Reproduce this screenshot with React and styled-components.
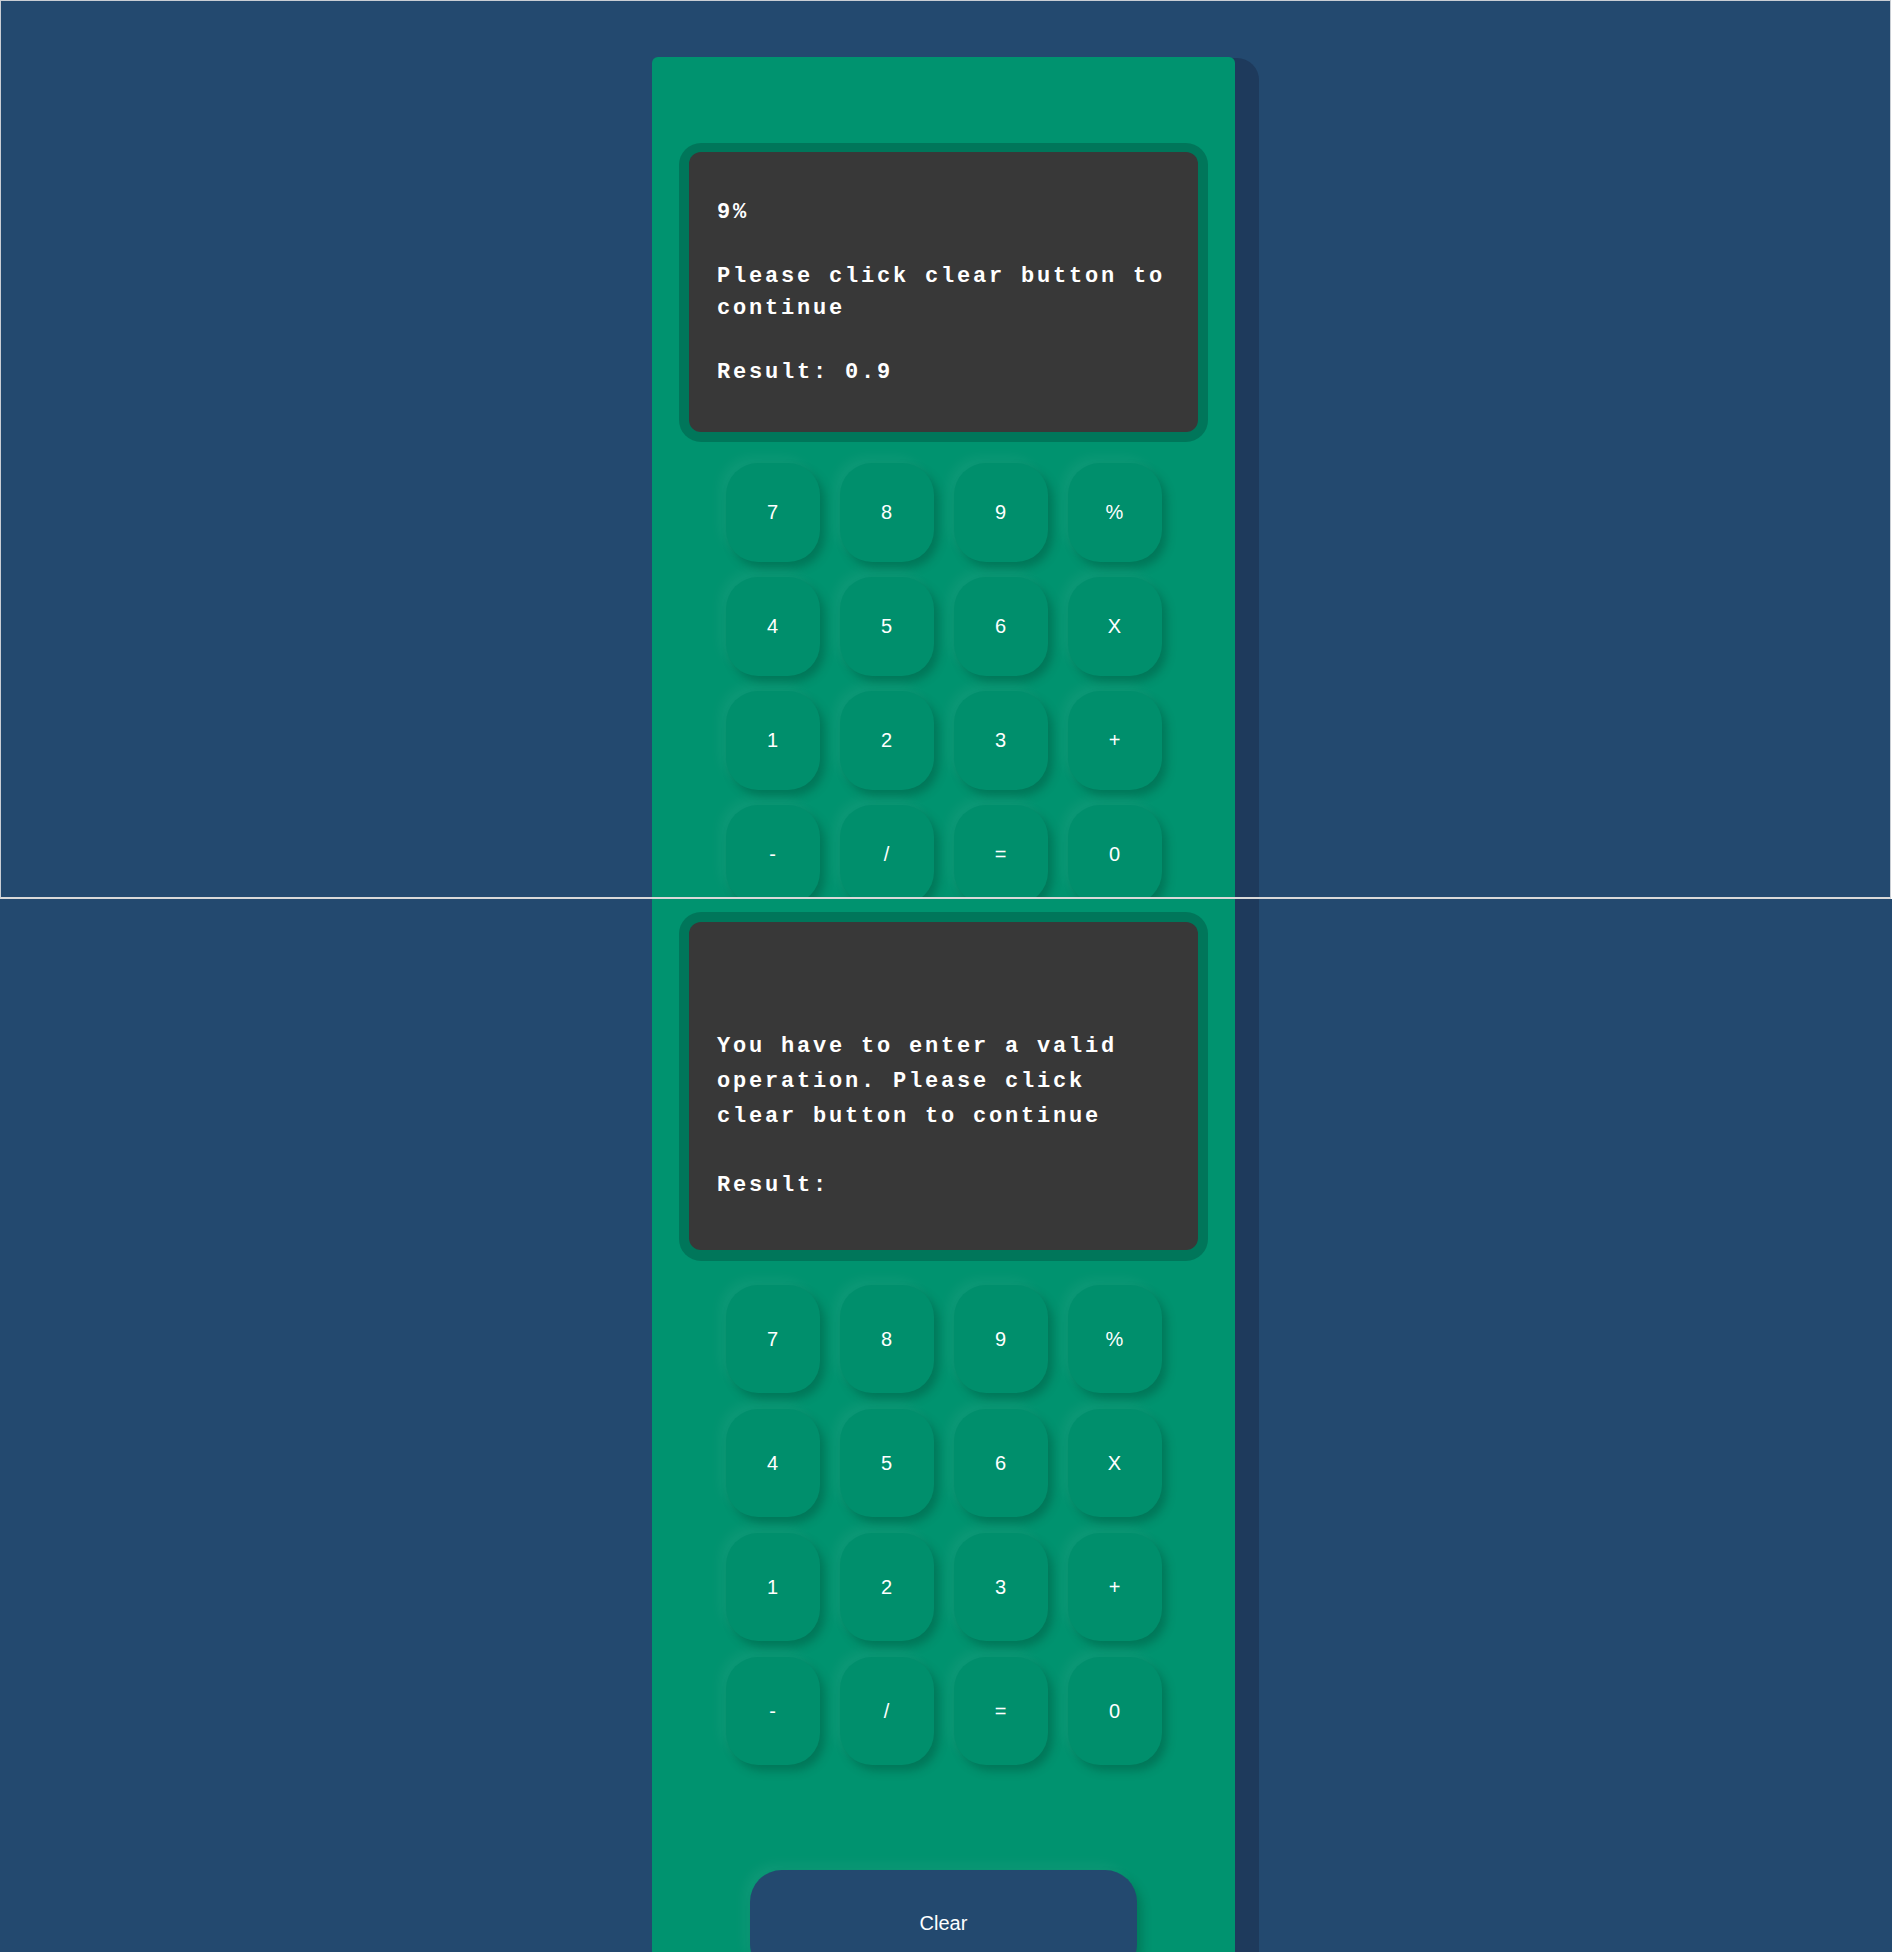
import styled, { createGlobalStyle } from "styled-components"

const GlobalStyle = createGlobalStyle`
  body {
    margin: 0;
    background: #ffffff;
  }
`

const keys = ["7", "8", "9", "%", "4", "5", "6", "X", "1", "2", "3", "+", "-", "/", "=", "0"]

const Page = styled.div`
  width: 1896px;
  display: flex;
  flex-direction: column;
`

const Shot = styled.section`
  box-sizing: border-box;
  isolation: isolate;
  width: ${p => p.$w}px;
  height: ${p => p.$h}px;
  background: #23496f;
  overflow: hidden;
  border-top: ${p => (p.$framed ? "1px solid #c9ced4" : "none")};
  border-left: ${p => (p.$framed ? "1px solid #c9ced4" : "none")};
  border-right: ${p => (p.$framed ? "1px solid #c9ced4" : "none")};
  border-bottom: ${p => (p.$framed ? "2px solid #d9d9d9" : "none")};
`

const Card = styled.div`
  position: relative;
  box-sizing: border-box;
  width: 583px;
  height: 1400px;
  margin-left: ${p => p.$left}px;
  margin-top: ${p => p.$top}px;
  padding-top: ${p => p.$padTop}px;
  background: #00936f;
  border-radius: 6px;
  display: flex;
  flex-direction: column;
  align-items: center;

  /* dark slab behind the right edge */
  &::before {
    content: "";
    position: absolute;
    z-index: -1;
    top: 1px;
    right: -24px;
    width: 60px;
    bottom: 0;
    background: #1e3a5c;
    border-radius: 6px 22px 0 0;
  }
`

const Frame = styled.div`
  box-sizing: border-box;
  width: 529px;
  padding: ${p => p.$pad};
  background: #00765a;
  border-radius: 22px;
`

const Screen = styled.div`
  box-sizing: border-box;
  background: #383838;
  border-radius: 12px;
  padding: ${p => p.$pt}px 28px ${p => p.$pb}px 28px;
  display: flex;
  flex-direction: column;
  gap: ${p => p.$gap}px;
  color: #ffffff;
  font-family: "Liberation Mono", "DejaVu Sans Mono", monospace;
  font-weight: 700;
  font-size: 22px;
  letter-spacing: 2.8px;
  line-height: ${p => p.$lh}px;
`

const Line = styled.p`
  margin: 0;
  min-height: ${p => p.$lh}px;
  white-space: pre-wrap;
`

const Keypad = styled.div`
  display: grid;
  grid-template-columns: repeat(4, 94px);
  grid-auto-rows: ${p => p.$rowH}px;
  column-gap: 20px;
  row-gap: ${p => p.$rowGap}px;
  margin-top: ${p => p.$top}px;
`

const Key = styled.button`
  border: none;
  padding: 0;
  border-radius: 32px;
  background: #008f6c;
  color: #ffffff;
  font-family: "Liberation Sans", Arial, sans-serif;
  font-size: 20px;
  box-shadow: 5px 6px 9px rgba(0, 70, 48, 0.35), -6px -6px 12px rgba(255, 255, 255, 0.05);
  cursor: pointer;
`

const ClearButton = styled.button`
  width: 387px;
  height: 106px;
  margin-top: 105px;
  border: none;
  border-radius: 32px;
  background: #23496f;
  color: #ffffff;
  font-family: "Liberation Sans", Arial, sans-serif;
  font-size: 20px;
  box-shadow: 5px 6px 10px rgba(0, 70, 48, 0.3), -6px -6px 12px rgba(255, 255, 255, 0.05);
  cursor: pointer;
`

function Calculator({ left, top, padTop, framePad, screen, lines, rowH, rowGap, gridTop, withClear }) {
    return (
        <Card $left={left} $top={top} $padTop={padTop}>
            <Frame $pad={framePad}>
                <Screen $pt={screen.pt} $pb={screen.pb} $gap={screen.gap} $lh={screen.lh}>
                    {lines.map((group, i) => (
                        <Line key={i} $lh={screen.lh}>{group}</Line>
                    ))}
                </Screen>
            </Frame>
            <Keypad $rowH={rowH} $rowGap={rowGap} $top={gridTop}>
                {keys.map(k => (
                    <Key key={k}>{k}</Key>
                ))}
            </Keypad>
            {withClear && <ClearButton>Clear</ClearButton>}
        </Card>
    )
}

export default function App() {
    return (
        <Page>
            <GlobalStyle />
            <Shot $w={1891} $h={899} $framed>
                <Calculator
                    left={651}
                    top={56}
                    padTop={86}
                    framePad="9px 10px 10px"
                    screen={{ pt: 45, pb: 43, gap: 32, lh: 32 }}
                    lines={["9%", "Please click clear button to continue", "Result: 0.9"]}
                    rowH={99}
                    rowGap={15}
                    gridTop={21}
                />
            </Shot>
            <Shot $w={1892} $h={1053}>
                <Calculator
                    left={652}
                    top={-80}
                    padTop={93}
                    framePad="10px 10px 11px"
                    screen={{ pt: 38, pb: 47, gap: 34, lh: 35 }}
                    lines={["", "You have to enter a valid operation. Please click clear button to continue", "Result:"]}
                    rowH={108}
                    rowGap={16}
                    gridTop={24}
                    withClear
                />
            </Shot>
        </Page>
    )
}
